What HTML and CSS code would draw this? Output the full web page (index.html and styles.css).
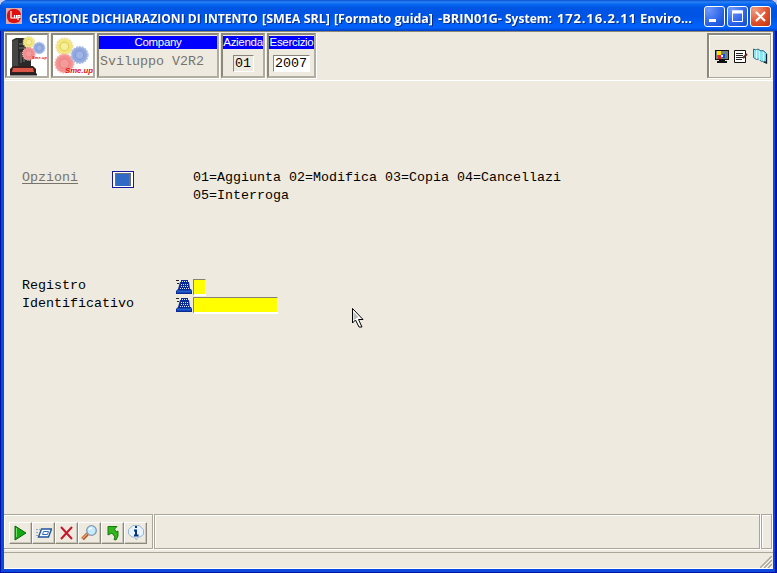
FILE: index.html
```html
<!DOCTYPE html>
<html lang="it">
<head>
<meta charset="utf-8">
<title>GESTIONE DICHIARAZIONI DI INTENTO</title>
<link rel="stylesheet" href="styles.css">
</head>
<body>
<svg width="0" height="0" class="defs" aria-hidden="true">
  <defs>
    <symbol id="gears" viewBox="0 0 40 40">
      <circle cx="12" cy="11" r="8.5" fill="#f4e779" stroke="#eee0a0" stroke-width="2" stroke-dasharray="2 1"/>
      <circle cx="12" cy="11" r="4.5" fill="#f7ee9a" stroke="#d8c95c"/>
      <circle cx="12" cy="29" r="9.5" fill="#f58e8e" stroke="#f3aaa6" stroke-width="2" stroke-dasharray="2 1"/>
      <circle cx="12" cy="29" r="5" fill="#f59c9a" stroke="#e08080"/>
      <circle cx="28" cy="20" r="8.5" fill="#91a9df" stroke="#a9bce8" stroke-width="2" stroke-dasharray="2 1"/>
      <circle cx="28" cy="20" r="4.5" fill="#9fb5e8" stroke="#7c96d0"/>
    </symbol>
    <symbol id="phone" viewBox="0 0 16 16">
      <path d="M0 1.500h3M1 4.500h2" stroke="#222"/>
      <path d="M5 1h7v2h1l1 7h1l1 2v3H0v-3l2-2 2-7h1z" fill="#0a2a96"/>
      <path d="M6 2.500h5M5 5.500h8M5 7.500h8M4 9.500h9" stroke="#d5e0ff" stroke-dasharray="1 1"/>
      <path d="M1 12.500h14" stroke="#2060d0" stroke-width="2"/>
    </symbol>
  </defs>
</svg>
<div class="window">
  <header class="titlebar">
    <svg class="app-icon" width="16" height="16" viewBox="0 0 16 16"><rect width="16" height="16" fill="#d8a9ad"/><rect x="1" y="1" width="14" height="14" rx="6" fill="#dc1010"/><path d="M5 3v7h3M8.500 7v3h2V7M12 12V7.500h2v2h-2" fill="none" stroke="#fff" stroke-width="1.200"/></svg>
    <svg class="title" width="676" height="30">
      <text y="22"><tspan x="5" textLength="229" lengthAdjust="spacingAndGlyphs">GESTIONE DICHIARAZIONI DI INTENTO</tspan> <tspan x="238" textLength="68" lengthAdjust="spacingAndGlyphs">[SMEA SRL]</tspan> <tspan x="310" textLength="99" lengthAdjust="spacingAndGlyphs">[Formato guida]</tspan> <tspan x="414" textLength="64" lengthAdjust="spacingAndGlyphs">-BRIN01G-</tspan> <tspan x="481" textLength="47" lengthAdjust="spacingAndGlyphs">System:</tspan> <tspan x="533" textLength="79">172.16.2.11</tspan> <tspan x="616" textLength="52">Enviro...</tspan></text>
    </svg>
    <div class="controls">
      <span class="ctl"><svg width="19" height="19"><path d="M4 13.500h7" stroke="#fff" stroke-width="3"/></svg></span>
      <span class="ctl"><svg width="19" height="19"><path d="M4.500 4h10v10.500h-10z" fill="none" stroke="#fff"/><path d="M4 5h11" stroke="#fff" stroke-width="3"/></svg></span>
      <span class="ctl close"><svg width="19" height="19"><path d="M5 5l9 9M14 5l-9 9" stroke="#fff" stroke-width="2.200"/></svg></span>
    </div>
  </header>
  <main class="client">
    <div class="topbar">
      <div class="cell logo"><svg width="40" height="41" viewBox="0 0 40 41">
        <path d="M5 5l4-2h12l3 3v27H5z" fill="#292929"/><path d="M5 6l6-2v29H5z" fill="#454545"/><path d="M12 9h7M12 13h8M14 17v11M17 19v8" stroke="#777"/>
        <path d="M3 34l3-3h20l3 3v6H3z" fill="#35201e"/><path d="M6 33h20l1 4H5z" fill="#db5548"/><path d="M3 39.500h27" stroke="#222" stroke-width="2"/>
        <svg x="14" y="0" width="26" height="26"><use href="#gears"/></svg>
        <text x="25" y="24" class="brand small" textLength="15">Sme.up</text></svg></div>
      <div class="cell logo"><svg width="40" height="41" viewBox="0 0 40 41"><svg width="38" height="40"><use href="#gears"/></svg><text x="12" y="38" class="brand" textLength="28" lengthAdjust="spacingAndGlyphs">Sme.up</text></svg></div>
      <div class="cell company"><div class="head">Company</div><div class="company-name">Sviluppo V2R2</div></div>
      <div class="cell azienda"><div class="head">Azienda</div><div class="box">01</div></div>
      <div class="cell esercizio"><div class="head">Esercizio</div><div class="box white">2007</div></div>
      <div class="tools">
        <svg width="14" height="15" viewBox="0 0 14 15"><path d="M0 1h14v10H0z" fill="#111"/><path d="M1 2h12v8H1z" fill="#718080"/><path d="M2 2h4v4H2z" fill="#ffdf00"/><path d="M3 6h3v4H3z" fill="#e42020"/><path d="M7 5h3v4H7z" fill="#164cc4"/><path d="M6 6h2v2H6z" fill="#fff"/><path d="M4 11h6v1h2v2H2v-2h2z" fill="#111"/></svg>
        <svg width="14" height="15" viewBox="0 0 14 15"><path d="M.5 1.500h11v12H.5z" fill="#fff" stroke="#111"/><path d="M2 4.500h7M2 6.500h7M2 8.500h7M2 10.500h6" stroke="#222"/><path d="M9 9l4-4" stroke="#5b2c20" stroke-width="2"/></svg>
        <svg width="15" height="16" viewBox="0 0 15 16"><path d="M.5 1l2.500 1 2-1 3 2 2-.5 3.500 3v8.500l-3-1-2 .5-3-2.500-2 .5-3-2z" fill="#8ce5f4" stroke="#2a6d88"/><path d="M3.500 2v9M6.500 3v9M10.500 4v9" stroke="#d8f8ff"/><path d="M13.500 6v9l-3-1" stroke="#123" stroke-width="1.300" fill="none"/></svg>
      </div>
    </div>
    <section class="form">
      <div class="options">
        <a class="link">Opzioni</a><span class="option-input"><i></i></span>
        <div class="legend">01=Aggiunta 02=Modifica 03=Copia 04=Cancellazi<br>05=Interroga</div>
      </div>
      <div class="fields">
        <div class="field"><label>Registro</label><svg width="16" height="16"><use href="#phone"/></svg><span class="input short"></span></div>
        <div class="field"><label>Identificativo</label><svg width="16" height="16"><use href="#phone"/></svg><span class="input long"></span></div>
      </div>
    </section>
    <footer class="bottombar">
      <div class="group buttons">
        <span class="btn"><svg width="16" height="16"><path d="M2 1l11 7-11 7z" fill="#12a812" stroke="#076507"/><path d="M3.500 3v9" stroke="#76df68"/></svg></span>
        <span class="btn"><svg width="16" height="16"><path d="M5.500 4h10l-3 8h-10z" fill="#f4faff" stroke="#2056a0" stroke-width="1.400"/><path d="M7.500 6.500h5l-1 3h-5z" fill="none" stroke="#3870b6"/><path d="M0 4.500h4M0 7.500h3M0 10.500h2" stroke="#8ca9ce" stroke-dasharray="2 1"/></svg></span>
        <span class="btn"><svg width="16" height="16"><path d="M2 2l11 12M13 2L2 14" stroke="#c7152a" stroke-width="2"/></svg></span>
        <span class="btn"><svg width="17" height="16"><path d="M1.500 14l5-5" stroke="#a95529" stroke-width="3.500"/><path d="M1.500 13.500l4.500-4.500" stroke="#f0a162" stroke-width="1.500"/><circle cx="10.500" cy="5.500" r="4.800" fill="#c4ecfb" stroke="#8494b3" stroke-width="1.300"/><path d="M8 5q1-2 3-2" fill="none" stroke="#fff" stroke-width="1.500"/></svg></span>
        <span class="btn"><svg width="16" height="16"><path d="M3 1.500h9L9.500 4l1.500 3 2-1v5l-2 4-2-.5 1-2.500-3-4L3 10z" fill="#32b71d" stroke="#16780f"/></svg></span>
        <span class="btn"><svg width="16" height="16"><path d="M5 .5h6l4.500 4v5l-3.500 2.500H9.500l-1 3-2-3H4L.5 9V4.500z" fill="#e7f3ff" stroke="#9bb5d2"/><path d="M8 1v2M6 5.500h2v5M6 10.500h4.500" fill="none" stroke="#06347e" stroke-width="2"/></svg></span>
      </div>
      <div class="group message"></div>
      <div class="group end"></div>
    </footer>
    <div class="status"><svg width="12" height="12"><path d="M0 12L12 0M4 12l8-8M8 12l4-4" stroke="#aaa798" stroke-width="1.500"/><path d="M2 12L12 2M6 12l6-6M10 12l2-2" stroke="#fff"/></svg></div>
  </main>
</div>
<svg class="cursor" width="13" height="22" viewBox="0 0 13 22"><path d="M.5 .5v14.500l3-3 3.500 7h3l-3.500-7.500H11z" fill="#fff" stroke="#000"/><path d="M1.500 4v8l5-3z" fill="#bbb"/></svg>
</body>
</html>
```

FILE: styles.css
```css
* { box-sizing: border-box; }
body { margin: 0; background: #c5cdf4; overflow: hidden; }
svg { display: block; flex: none; }
.defs { position: absolute; }
.window { width: 777px; height: 573px; padding: 0 4px 4px; display: flex; flex-direction: column; border-radius: 8px 8px 0 0; background: #0c49dc; box-shadow: inset 1px -1px #0011a5, inset -2px -1px #0011a5; overflow: hidden; }
.titlebar { height: 31px; flex: none; margin: 0 -4px; padding: 0 6px; display: flex; align-items: center; background: linear-gradient(#0650d0 0, #2d82f6 2px, #0869f1 4px, #0055e3 8px, #0054e5 17px, #0061fc 25px, #0060fa 28px, #0040c4 31px); }
.app-icon { margin-top: 1px; }
.title { margin-left: 2px; font: bold 13px "Open Sans", "Noto Sans", sans-serif; fill: #fff; filter: drop-shadow(1px 1px 0 #06308c); }
.controls { display: flex; gap: 2px; margin-left: auto; padding-top: 2px; }
.ctl { width: 21px; height: 21px; border: 1px solid #fff; border-radius: 3px; background: radial-gradient(circle at 20% 15%, #6c98fb, #2861e8 65%, #164bc9); }
.close { background: radial-gradient(circle at 20% 15%, #f09c81, #df4d29 60%, #bd3511); }
.client { flex: 1; display: flex; flex-direction: column; background: #eeeadf; }
.topbar { height: 50px; flex: none; display: flex; gap: 2px; padding: 1px 2px 3px 1px; border-top: 1px solid #8d8979; border-bottom: 1px solid #fff; }
.cell { height: 45px; border: 2px solid; border-color: #8b887d #b1aea1 #b1aea1 #8b887d; background: #eeeadf; box-shadow: 1px 1px #fff; padding: 1px 0; }
.logo { width: 44px; padding: 0; background: #fff; }
.brand { font: italic bold 8px "Liberation Sans", sans-serif; fill: #dd1020; }
.small { font-size: 4px; }
.company { width: 122px; }
.azienda { width: 44px; }
.esercizio { width: 49px; }
.head { height: 13px; background: #00f; color: #fff; font: 11.500px/13px "Liberation Sans", sans-serif; text-align: center; white-space: nowrap; letter-spacing: -.3px; }
.company-name, .form, .box { font-family: "Liberation Mono", monospace; font-size: 13.330px; color: #000; white-space: nowrap; }
.company-name { margin: 5px 1px; line-height: 16px; color: #77746c; }
.box { width: 21px; height: 17px; margin: 6px 0 0 10px; line-height: 15px; padding-left: 1px; border: 1px solid #88857a; border-right-color: #fff; border-bottom-color: #fff; }
.white { width: 37px; margin-left: 4px; padding-left: 1px; background: #fff; }
.tools { width: 64px; height: 45px; margin-left: auto; display: flex; align-items: center; gap: 5px; padding-left: 6px; border: 1px solid #aaa798; border-left: 2px solid #8b887d; border-top: 2px solid #8b887d; box-shadow: 1px 1px #fff, inset 1px 1px #fff; }
.form { flex: 1; padding: 88px 18px 0; line-height: 18px; }
.options { display: flex; height: 108px; }
.link { width: 56px; height: 15px; line-height: 17px; color: #77746c; border-bottom: 1px solid #77746c; }
.option-input { width: 22px; height: 17px; margin: 2px 0 0 34px; padding: 1px; border: 1px solid #1717a3; background: #fff; }
.option-input i { display: block; width: 16px; height: 13px; margin-left: 1px; background: #316ac5; border: 1px solid #706f70; border-width: 1px 2px 0 1px; }
.legend { margin-left: 59px; }
.field { height: 18px; display: flex; }
.field label { width: 154px; }
.field svg { margin-top: 2px; }
.input { height: 17px; margin: 2px 0 0 1px; background: #ff0; border: 1px solid #85836f; border-right: 1px solid #fff; border-bottom: 2px solid #fff; }
.short { width: 13px; }
.long { width: 85px; }
.bottombar { height: 37px; flex: none; display: flex; gap: 1px; padding: 0 1px 2px 0; }
.group { height: 35px; border: 1px solid #aaa798; box-shadow: inset 1px 1px #fff, 1px 1px #fff; }
.buttons { width: 149px; padding: 7px 5px; display: flex; border-left: 0; }
.btn { width: 23px; height: 22px; display: flex; align-items: center; justify-content: center; border: 1px solid; border-color: #fff #8b887d #8b887d #fff; box-shadow: inset -1px -1px #c9c5b7; }
.message { flex: 1; }
.end { width: 11px; }
.status { height: 17px; margin: 1px 0 0; flex: none; display: flex; justify-content: flex-end; align-items: flex-end; padding: 0 1px; border-top: 1px solid #aaa798; border-bottom: 1px solid #fff; }
.cursor { position: absolute; left: 352px; top: 308px; }
```
